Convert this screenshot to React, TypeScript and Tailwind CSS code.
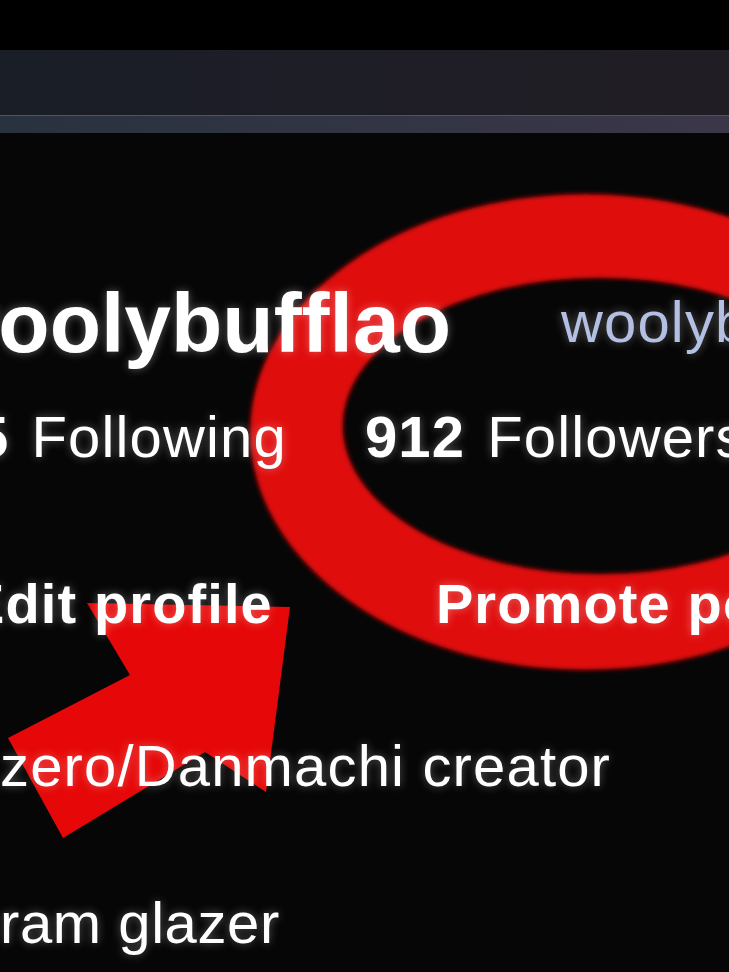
import React from "react";

const glow = "[text-shadow:0_0_10px_rgba(255,255,255,0.35)]";

function Marks() {
    return (
        <svg
            className="absolute inset-0 h-full w-full"
            viewBox="0 0 729 972"
            aria-hidden
        >
            <defs>
                <filter id="soft" x="-10%" y="-10%" width="120%" height="120%">
                    <feGaussianBlur stdDeviation="2.2" />
                </filter>
            </defs>
            {/* circle drawn round the followers */}
            <path
                filter="url(#soft)"
                fill="#e00707"
                fillRule="evenodd"
                d="M250 432 a335 238 0 1 0 670 0 a335 238 0 1 0 -670 0 Z M343 426 a257 148 0 1 0 514 0 a257 148 0 1 0 -514 0 Z"
            />
            {/* arrow */}
            <polygon
                fill="#e60808"
                points="87,603 290,607 266,792 205,752 63,838 8,738 130,675"
            />
        </svg>
    );
}

export default function App() {
    return (
        <div className="relative h-[972px] w-[729px] overflow-hidden bg-[#060606] font-['Liberation_Sans',Arial,sans-serif] text-white">
            <Marks />
            <div className="h-[50px] bg-black" />
            <div className="h-[65px] bg-linear-to-r from-[#1a1e27] to-[#211d24]" />
            <div className="h-[18px] border-t border-[#4b5464] bg-linear-to-r from-[#29323f] to-[#3b3748]" />

            <div className={`relative z-10 whitespace-nowrap ${glow}`}>
                <div className="mt-[148px] flex items-start">
                    <span className="ml-[-67px] text-[84px] font-bold leading-none">
                        woolybufflao
                    </span>
                    <span className="ml-[110px] mt-[12px] text-[58px] leading-none tracking-[0.02em] text-[#b3bfe3]">
                        woolybufflao
                    </span>
                </div>

                <div className="mt-[43px] flex items-start text-[58px] leading-none tracking-[0.02em]">
                    <span className="ml-[-24px] font-bold">5</span>
                    <span className="ml-[22px]">Following</span>
                    <span className="ml-[78px] font-bold">912</span>
                    <span className="ml-[22px]">Followers</span>
                </div>

                <div className="mt-[110px] flex items-start text-[56px] font-bold leading-none tracking-[0.02em]">
                    <span className="ml-[-33px]">Edit profile</span>
                    <span className="ml-[163px]">Promote post</span>
                </div>

                <p className="mt-[105px] text-[58px] leading-none tracking-[0.02em]">
                    zero/Danmachi creator
                </p>
                <p className="mt-[99px] text-[58px] leading-none tracking-[0.01em]">
                    ram glazer
                </p>
            </div>
        </div>
    );
}
